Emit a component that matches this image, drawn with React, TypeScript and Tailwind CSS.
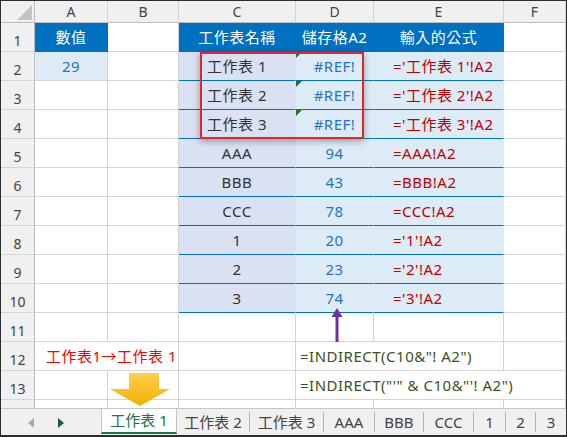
import type { ReactNode } from 'react'

const FONT = '"Noto Sans", "Noto Sans CJK TC", sans-serif'

type CellProps = {
  children?: ReactNode
  className?: string
}

// plain grid cell: right and bottom gridline
function Cell({ children, className = '' }: CellProps) {
  return (
    <div className={`relative flex h-[29px] items-center border-r border-b pt-[1px] text-[15px] leading-none tracking-[0.5px] whitespace-nowrap ${className}`}>
      {children}
    </div>
  )
}

function Flag() {
  return (
    <svg className="absolute left-0 top-0" width="6" height="6" viewBox="0 0 6 6">
      <polygon points="0,0 6,0 0,6" fill="#1c7a1c" />
    </svg>
  )
}

const grey = 'border-[#d4d4d4] bg-white'
const headBlue = 'border-[#0070c0] bg-[#0070c0] text-white justify-center'
const cCol = 'border-r-[#d9e1f2] border-b-[#0070c0] bg-[#d9e1f2] text-[#333333] justify-center'
const dCol = 'border-r-[#ddebf7] border-b-[#0070c0] bg-[#ddebf7] text-[#2374c6] justify-center'
const eCol = 'border-r-[#ddebf7] border-b-[#0070c0] bg-[#ddebf7] text-[#c00000] pl-[19px]'

const dataRows = [
  { c: '工作表 1', d: '#REF!', e: "='工作表 1'!A2", flag: true },
  { c: '工作表 2', d: '#REF!', e: "='工作表 2'!A2", flag: true },
  { c: '工作表 3', d: '#REF!', e: "='工作表 3'!A2", flag: true },
  { c: 'AAA', d: '94', e: '=AAA!A2' },
  { c: 'BBB', d: '43', e: '=BBB!A2' },
  { c: 'CCC', d: '78', e: '=CCC!A2' },
  { c: '1', d: '20', e: "='1'!A2" },
  { c: '2', d: '23', e: "='2'!A2" },
  { c: '3', d: '74', e: "='3'!A2" },
]

function RowHead({ n }: { n: number }) {
  return (
    <div className="flex h-[29px] items-end justify-center border-r border-b border-r-[#bdbdbd] border-b-[#d4d4d4] bg-[#f0f0f0] pb-[3px] text-[14px] leading-none text-[#444]">
      {n}
    </div>
  )
}

const tabs = [
  { label: '工作表 2', w: 'w-[73px]' },
  { label: '工作表 3', w: 'w-[74px]' },
  { label: 'AAA', w: 'w-[51px]' },
  { label: 'BBB', w: 'w-[49px]' },
  { label: 'CCC', w: 'w-[50px]' },
  { label: '1', w: 'w-[32px]' },
  { label: '2', w: 'w-[30px]' },
  { label: '3', w: 'w-[30px]', last: true },
]

export default function App() {
  return (
    <div
      className="flex h-[437px] w-[567px] flex-col overflow-hidden border-x border-t border-b-2 border-[#2d2d2d] bg-white"
      style={{ fontFamily: FONT }}
    >
      <div className="relative h-[407px] shrink-0 overflow-hidden">
        <div className="grid grid-cols-[34px_73px_71px_117px_78px_130px_1fr]">
          {/* column headers */}
          <div className="relative h-[22px] border-r border-b border-[#bdbdbd] bg-[#f0f0f0]">
            <svg className="absolute left-[16px] top-[4px]" width="15" height="15" viewBox="0 0 15 15">
              <polygon points="15,0 15,15 0,15" fill="#c3c3c3" />
            </svg>
          </div>
          {['A', 'B', 'C', 'D', 'E', 'F'].map((l) => (
            <div
              key={l}
              className="flex h-[22px] items-center justify-center border-r border-b border-r-[#d4d4d4] border-b-[#bdbdbd] bg-[#f0f0f0] text-[14px] text-[#444]"
            >
              {l}
            </div>
          ))}

          {/* row 1 */}
          <RowHead n={1} />
          <Cell className={headBlue}>數值</Cell>
          <Cell className={grey} />
          <Cell className={headBlue}>工作表名稱</Cell>
          <Cell className={headBlue}>儲存格A2</Cell>
          <Cell className={headBlue}>輸入的公式</Cell>
          <Cell className={grey} />

          {/* rows 2-10 */}
          {dataRows.map((r, i) => (
            <div key={i} className="contents">
              <RowHead n={i + 2} />
              {i === 0 ? (
                <Cell className="justify-center border-[#d4d4d4] bg-[#ddebf7] text-[#2374c6]">29</Cell>
              ) : (
                <Cell className={grey} />
              )}
              <Cell className={grey} />
              <Cell className={cCol}>{r.c}</Cell>
              <Cell className={dCol}>
                {r.flag ? <Flag /> : null}
                {r.d}
              </Cell>
              <Cell className={eCol}>{r.e}</Cell>
              <Cell className={grey} />
            </div>
          ))}

          {/* row 11 */}
          <RowHead n={11} />
          {[0, 1, 2, 3, 4, 5].map((k) => (
            <Cell key={k} className={grey} />
          ))}

          {/* row 12 */}
          <RowHead n={12} />
          <Cell className={`${grey} col-span-2 justify-center pl-[10px] text-[#ff0000]`}>工作表1→工作表 1</Cell>
          <Cell className={grey} />
          <Cell className={`${grey} col-span-2 pl-[4px] text-[#3a5320]`}>=INDIRECT(C10&amp;"! A2")</Cell>
          <Cell className={grey} />

          {/* row 13 */}
          <RowHead n={13} />
          <Cell className={grey} />
          <Cell className={grey} />
          <Cell className={grey} />
          <Cell className={`${grey} col-span-3 pl-[4px] text-[#3a5320]`}>=INDIRECT("'" &amp; C10&amp;"'! A2")</Cell>

          {/* row 14, cut off */}
          <div className="h-[8px] border-r border-r-[#bdbdbd] bg-[#f0f0f0]" />
          {[0, 1, 2, 3, 4, 5].map((k) => (
            <div key={k} className="h-[8px] border-r border-[#d4d4d4]" />
          ))}
        </div>

        {/* red highlight box */}
        <div className="absolute left-[199px] top-[51px] h-[87px] w-[164px] border-2 border-[#e3262b] shadow-[0_2px_7px_rgba(0,0,0,0.35)]" />

        {/* purple arrow */}
        <svg className="absolute left-[330px] top-[307px]" width="12" height="34" viewBox="0 0 12 34">
          <polygon points="6,0 11.5,9 0.5,9" fill="#7030a0" />
          <rect x="4.5" y="8" width="3" height="26" fill="#7030a0" />
        </svg>

        {/* yellow arrow */}
        <svg className="absolute left-[109px] top-[372px]" width="60" height="33" viewBox="0 0 60 33">
          <defs>
            <linearGradient id="ya" x1="0" y1="0" x2="0" y2="1">
              <stop offset="0" stopColor="#ffd04a" />
              <stop offset="1" stopColor="#f0b000" />
            </linearGradient>
          </defs>
          <polygon points="19,0 49,0 49,16 60,16 30,33 0,16 19,16" fill="url(#ya)" />
        </svg>
      </div>

      {/* sheet tabs */}
      <div className="flex h-[27px] shrink-0 items-stretch border-t border-[#c6c6c6] bg-[#f0f0f0] text-[15px] text-[#444]">
        <div className="relative flex w-[100px] items-center">
          <svg className="absolute left-[27px] top-[9px]" width="6" height="10" viewBox="0 0 6 10">
            <polygon points="6,0 6,10 0,5" fill="#a8a8a8" />
          </svg>
          <svg className="absolute left-[57px] top-[9px]" width="6" height="10" viewBox="0 0 6 10">
            <polygon points="0,0 0,10 6,5" fill="#1b5e34" />
          </svg>
        </div>
        <div className="mb-[1px] flex w-[76px] items-center justify-center border-x border-b-2 border-x-[#c6c6c6] border-b-[#217346] bg-white text-[#217346]">
          工作表 1
        </div>
        {tabs.map((t) => (
          <div key={t.label} className={`flex items-center ${t.w}`}>
            <span className="flex-1 text-center">{t.label}</span>
            {t.last ? null : <span className="h-[20px] w-px bg-[#b4b4b4]" />}
          </div>
        ))}
      </div>
    </div>
  )
}
